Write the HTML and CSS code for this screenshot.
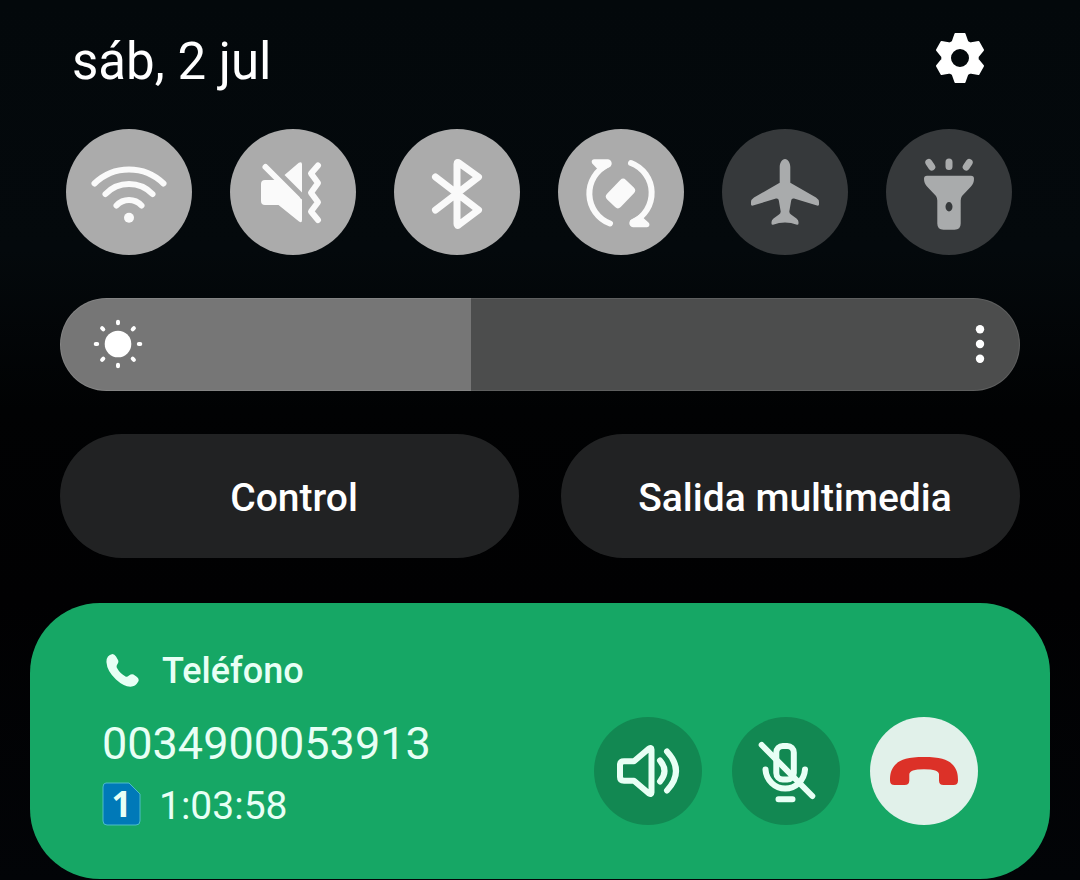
FILE: index.html
```
<!DOCTYPE html>
<html lang="es">
<head>
    <meta charset="UTF-8">
    <meta name="viewport" content="width=device-width, initial-scale=1.0">
    <title>Panel rápido</title>
    <link rel="stylesheet" href="styles.css">
</head>
<body>
    <main class="panel">
        <header class="header">
            <h1 class="date">sáb, 2 jul</h1>
            <button type="button" class="settings" aria-label="Ajustes">
                <svg viewBox="-26 -26 52 52">
                    <path class="gear" fill-rule="evenodd" d="M-4.6-24H4.6L7.4-16 10-14.6 18.5-16 23-8 17.7-1.5V1.5L23 8 18.5 16 10 14.6 7.4 16 4.6 24H-4.6L-7.4 16-10 14.6-18.5 16-23 8-17.7 1.5V-1.5L-23-8-18.5-16-10-14.6-7.4-16ZM0-10A10 10 0 1 0 0 10 10 10 0 1 0 0-10Z"/>
                </svg>
            </button>
        </header>

        <!-- Quick toggles -->
        <section class="toggles">
            <button type="button" class="toggle on" aria-label="Wi-Fi" aria-pressed="true">
                <svg viewBox="0 0 126 126">
                    <path class="line" d="M28.500 54.500A49.500 49.500 0 0 1 97.500 54.500M39.500 65A32.600 32.600 0 0 1 86.500 65M50.500 76.500A17 17 0 0 1 75.500 76.500"/>
                    <circle cx="63" cy="88.700" r="5"/>
                </svg>
            </button>
            <button type="button" class="toggle on" aria-label="Vibrar" aria-pressed="true">
                <svg viewBox="0 0 126 126">
                    <path class="line" d="M35.500 38L67 69.500M88 36.500L81 44.500 88 54 81 63.700 88 73.300 81 82.500 88 91"/>
                    <path d="M35 51H46L72 70.500V91Q72 94.500 69 92.500L48.500 76H35Q31 76 31 72V55Q31 51 35 51ZM54.500 46L68.800 33.800Q72 32 72 35.500V63.500Z"/>
                </svg>
            </button>
            <button type="button" class="toggle on" aria-label="Bluetooth" aria-pressed="true">
                <svg viewBox="0 0 126 126">
                    <path class="line thick" d="M41.500 48L84.500 81 64.500 96Q63 97 63 95V35Q63 32.500 65 34L84.500 48 41.500 81"/>
                </svg>
            </button>
            <button type="button" class="toggle on" aria-label="Girar automáticamente" aria-pressed="true">
                <svg viewBox="0 0 126 126">
                    <path class="line" d="M52 94.500A32 32 0 0 1 50 35.500M73 34A32 32 0 0 1 75 93"/>
                    <path d="M36 30.300H50Q53.700 31 53.700 34.500 53.500 37.500 50 38.500L43 43 39 39.500 34.200 34.500Q32.500 31 36 30.300ZM89 98.300H75Q71.300 97.600 71.300 94 71.500 91 75 90L82 85.500 86 89.500 91 94Q92.500 97.600 89 98.300Z"/>
                    <rect x="49" y="55" width="27" height="19" rx="4" transform="rotate(-46 62.500 64.500)"/>
                </svg>
            </button>
            <button type="button" class="toggle" aria-label="Modo avión" aria-pressed="false">
                <svg viewBox="0 0 126 126">
                    <path d="M63 30C60 30 57.700 34 57.700 38V53.700L32 68.500Q29 70.500 29 73V75.500Q29 77 31 76.500L54 69.500Q56.500 69 56.800 71.500L58.700 82.500Q58.700 84.500 57 85.500L51.500 89.500Q49.500 91 49.500 93V94.500Q49.500 96 51 95.800 57 93.500 63 93.500 69 93.500 75 95.800 76.500 96 76.500 94.500V93Q76.500 91 74.500 89.500L69 85.500Q67.300 84.500 67.300 82.500L69.200 71.500Q69.500 69 72 69.500L95 76.500Q97 77 97 75.500V73Q97 70.500 94 68.500L68.300 53.700V38C68.300 34 66 30 63 30Z"/>
                </svg>
            </button>
            <button type="button" class="toggle" aria-label="Linterna" aria-pressed="false">
                <svg viewBox="0 0 126 126">
                    <path class="line thick" d="M63 33V37.500M42.800 33.500L45.800 38M83.200 33.500L80.200 38"/>
                    <path fill-rule="evenodd" d="M41 46.700H85Q88 46.700 88 49.700C88 53 87 55 85 57.500L76 67Q74.700 69 74.700 71.500V94.500Q74.700 100.700 68.500 100.700H57.500Q51.300 100.700 51.300 94.500V71.500Q51.300 69 50 67L41 57.500C39 55 38 53 38 49.700Q38 46.700 41 46.700ZM63 73A3.500 4.700 0 1 0 63 82.400 3.500 4.700 0 1 0 63 73Z"/>
                </svg>
            </button>
        </section>

        <section class="brightness">
            <input type="range" class="slider" min="0" max="1000" value="428" aria-label="Brillo">
            <svg class="sun" viewBox="-25 -25 50 50">
                <circle r="13.300"/>
                <path d="M0-20.800V-22.300M0 20.800V22.300M-20.800 0H-22.300M20.800 0H22.300M-14.700-14.700L-15.900-15.900M14.700-14.700L15.900-15.900M-14.700 14.700L-15.900 15.900M14.700 14.700L15.900 15.900"/>
            </svg>
            <button type="button" class="more" aria-label="Más opciones">
                <svg viewBox="0 0 10 40">
                    <circle cx="5" cy="5.300" r="4.200"/>
                    <circle cx="5" cy="20" r="4.200"/>
                    <circle cx="5" cy="34.700" r="4.200"/>
                </svg>
            </button>
        </section>

        <section class="shortcuts">
            <button type="button" class="shortcut">Control</button>
            <button type="button" class="shortcut">Salida multimedia</button>
        </section>

        <!-- Ongoing call -->
        <article class="call">
            <div class="call-info">
                <h2 class="app">
                    <svg class="phone" viewBox="0 0 33 35">
                        <path d="M6.500 0Q8.500 0 10 2.500L12 6Q13 8 11.500 10 10 12 11 14 14 19.500 19.500 22.500 21 23.300 23 21.500 25.500 19.500 27.500 20.500L31 23Q33.500 25 32.300 27.500 29.500 32.700 24.500 32.700 17.500 32.500 10 25.500 1 17 .5 8.500 0 1.500 6.500 0Z"/>
                    </svg>
                    Teléfono
                </h2>
                <p class="number">0034900053913</p>
                <p class="time">
                    <span class="sim">
                        <svg viewBox="0 0 39 44">
                            <path d="M4 1H27L38 12V39Q38 43 34 43H5Q1 43 1 39V5Q1 1 4 1Z"/>
                        </svg>
                        <b>1</b>
                    </span>
                    <span class="clock">1:03:58</span>
                </p>
            </div>
            <div class="call-actions">
                <button type="button" class="action" aria-label="Altavoz">
                    <svg viewBox="0 0 108 108">
                        <path class="line" d="M30 44.300H40L55 31.500Q57.500 30 57.500 32.500V75.500Q57.500 78 55 76.500L40 63.700H30Q26 63.700 26 60V48Q26 44.300 30 44.300Z"/>
                        <path class="line" d="M66 43.500Q75 54 66 64.500M73 34.500Q91 54 73 73.500"/>
                    </svg>
                </button>
                <button type="button" class="action" aria-label="Silenciar">
                    <svg viewBox="0 0 108 108">
                        <rect class="line" x="44.300" y="29" width="17.500" height="33.500" rx="6.500"/>
                        <path class="line" d="M33.500 52.500A19.800 20.500 0 0 0 73 52.500M46.500 82.300H60.500M29.700 28L80.300 79"/>
                    </svg>
                </button>
                <button type="button" class="action hang-up" aria-label="Colgar">
                    <svg viewBox="0 0 108 108">
                        <path d="M54 40C71 40 78 42.500 83 48 87 52.500 88 57 88 63.500Q88 68 83.500 68H73.500Q69 68 69 63.500V57.500Q69 52.300 54 52.300 39.300 52.300 39.300 57.500V63.500Q39.300 68 34.500 68H24.500Q20 68 20 63.500C20 57 21 52.500 25 48 30 42.500 37 40 54 40Z"/>
                    </svg>
                </button>
            </div>
        </article>
    </main>
</body>
</html>
```
FILE: styles.css
```
/* General Styles */
* {
    box-sizing: border-box;
}

body {
    margin: 0;
    font-family: Roboto, "Liberation Sans", sans-serif;
    color: #fff;
    background: linear-gradient(#03080b, #04090c 250px, #010203 410px, #010102 600px, #020407 880px);
    min-height: 100vh;
}

h1, h2, p {
    margin: 0;
}

button {
    font-family: inherit;
    color: inherit;
    border: none;
    padding: 0;
    background: none;
    cursor: pointer;
}

svg {
    display: block;
    fill: currentColor;
}

.line {
    fill: none;
    stroke: currentColor;
    stroke-width: 6px;
    stroke-linecap: round;
    stroke-linejoin: round;
}

.line.thick {
    stroke-width: 7px;
}

.panel {
    padding: 32px 30px 0;
}

.header {
    display: flex;
    justify-content: space-between;
    align-items: flex-start;
    padding: 0 64px 0 42px;
    margin-bottom: 37px;
}

.date {
    font-size: 51px;
    font-weight: 400;
    line-height: 60px;
}

.settings svg {
    width: 52px;
    height: 52px;
}

.gear {
    stroke: currentColor;
    stroke-width: 2px;
    stroke-linejoin: round;
}

/* Quick toggles */
.toggles {
    display: flex;
    justify-content: space-between;
    padding: 0 38px 0 36px;
    margin-bottom: 43px;
}

.toggle {
    width: 126px;
    height: 126px;
    border-radius: 50%;
    color: #a9abac;
    background: #36393b;
}

.toggle.on {
    color: #fafafa;
    background: #ababab;
}

/* Brightness */
.brightness {
    position: relative;
    margin: 0 30px 43px;
}

.slider {
    appearance: none;
    display: block;
    width: 100%;
    height: 93px;
    margin: 0;
    border-radius: 47px;
    background: linear-gradient(90deg, #767676 42.8%, #4c4d4d 42.8%);
    box-shadow: inset 0 0 0 1px rgba(255, 255, 255, 0.1);
    cursor: pointer;
}

.slider::-webkit-slider-thumb {
    appearance: none;
    width: 1px;
    height: 93px;
}

.sun {
    position: absolute;
    top: 21px;
    left: 33px;
    width: 50px;
    height: 50px;
    stroke-width: 4px;
    stroke-linecap: round;
    pointer-events: none;
}

.sun path {
    stroke: currentColor;
}

.more {
    position: absolute;
    top: 26px;
    right: 35px;
}

.more svg {
    width: 10px;
    height: 40px;
}

.shortcuts {
    display: grid;
    grid-template-columns: 1fr 1fr;
    gap: 42px;
    margin: 0 30px 45px;
}

.shortcut {
    height: 124px;
    padding: 4px 0 0 9px;
    border-radius: 62px;
    font-size: 39px;
    font-weight: 500;
    background: #212223;
}

/* Ongoing call */
.call {
    display: flex;
    justify-content: space-between;
    align-items: flex-end;
    padding: 46px 72px 50px;
    border-radius: 70px;
    color: #e8fff5;
    background: #16a765;
}

.app {
    display: flex;
    align-items: center;
    gap: 23px;
    padding-left: 4px;
    font-size: 36px;
    font-weight: 500;
    line-height: 44px;
}

.phone {
    width: 33px;
    height: 35px;
}

.number {
    margin-top: 21px;
    font-size: 45px;
    line-height: 60px;
}

.time {
    display: flex;
    align-items: center;
    gap: 18px;
    margin-top: 5px;
    font-size: 39px;
}

.clock {
    padding-top: 5px;
    line-height: 45px;
}

.sim {
    display: grid;
    justify-items: center;
    align-items: center;
}

.sim svg, .sim b {
    grid-area: 1 / 1;
}

.sim svg {
    width: 39px;
    height: 44px;
}

.sim path {
    fill: #0079b8;
    stroke: #4cbcc9;
    stroke-width: 1px;
}

.sim b {
    font-family: "Open Sans", sans-serif;
    font-size: 35px;
    font-weight: 700;
    line-height: 50px;
}

.call-actions {
    display: flex;
    gap: 30px;
    padding-bottom: 4px;
}

.action {
    width: 108px;
    height: 108px;
    border-radius: 50%;
    background: #128852;
}

.hang-up {
    color: #dc3128;
    background: #e1f1ea;
}
```
